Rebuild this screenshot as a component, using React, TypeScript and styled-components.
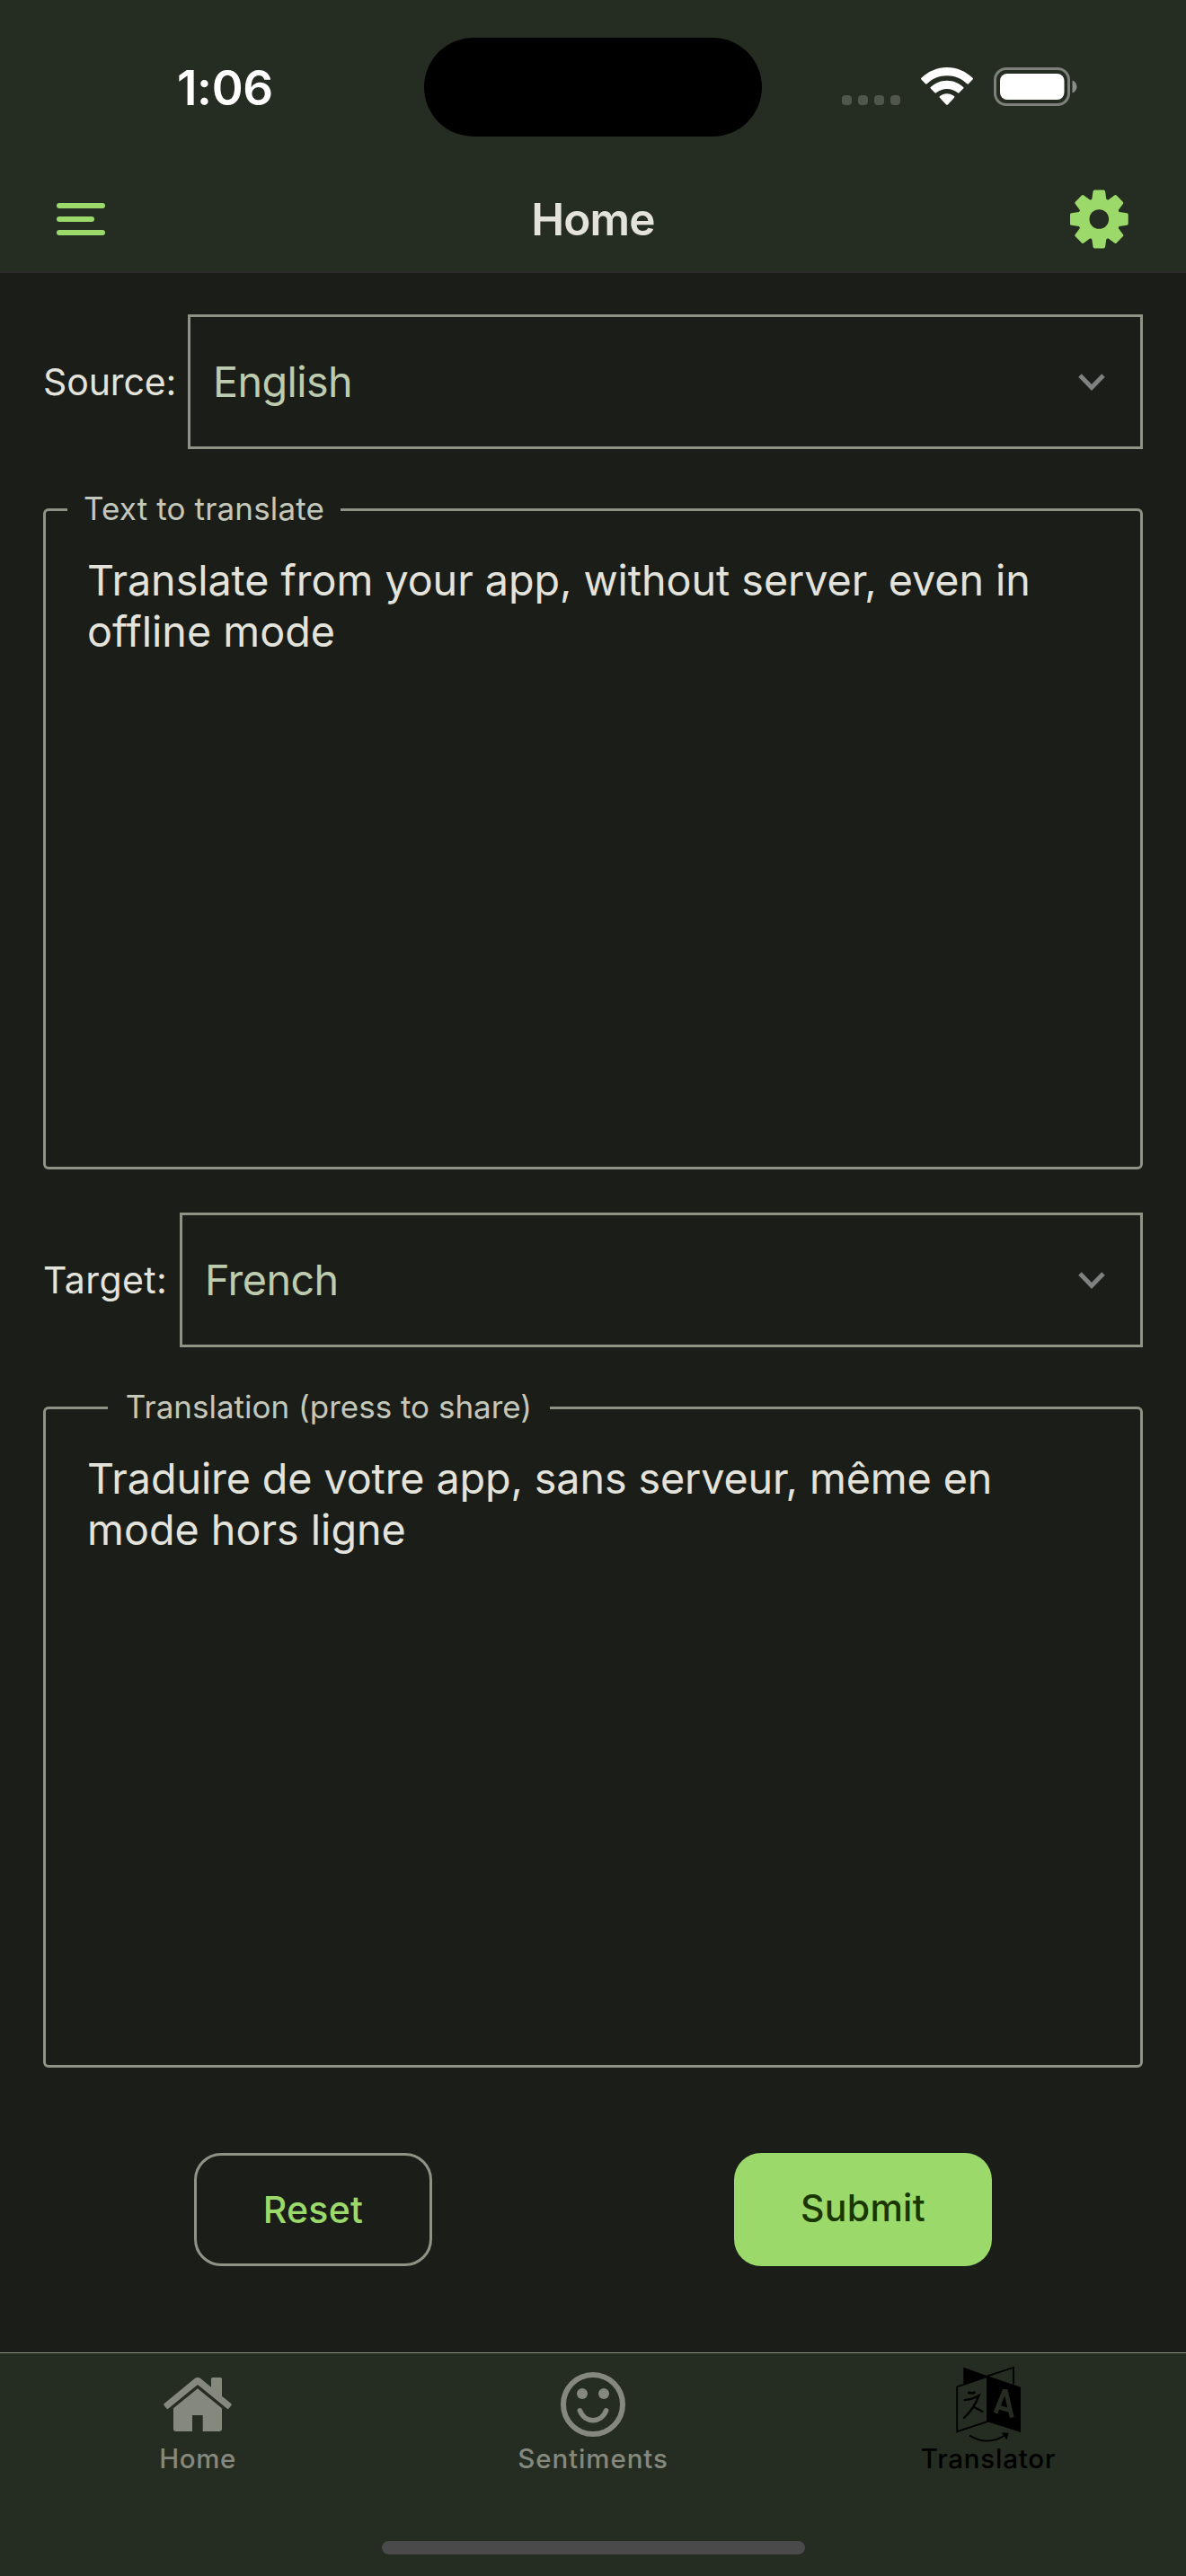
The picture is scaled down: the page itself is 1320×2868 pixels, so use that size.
import React from "react";
import styled, { createGlobalStyle } from "styled-components";

const c = {
  bar: "#252c21",
  page: "#1b1d18",
  primary: "#9cd96b",
  onPrimary: "#1b3700",
  outline: "#8f9285",
  text: "#e3e3dc",
  label: "#c4c8ba",
  select: "#bdcbaf",
  muted: "#85887d",
};

const Global = createGlobalStyle`
  html, body { margin: 0; background: ${c.page}; }
  * { box-sizing: border-box; }
  button { font: inherit; }
`;

const Screen = styled.div`
  width: 1320px;
  height: 2868px;
  display: flex;
  flex-direction: column;
  background: ${c.page};
  color: ${c.text};
  font-family: Inter, "Liberation Sans", sans-serif;
  overflow: hidden;
`;

const Header = styled.header`
  height: 304px;
  background: ${c.bar};
  border-bottom: 2px solid #2b2c29;
`;

const StatusBar = styled.div`
  height: 184px;
  display: grid;
  grid-template-columns: 472px 376px 472px;
`;

const Time = styled.div`
  padding: 66px 0 0 197px;
  font-size: 53px;
  line-height: 64px;
  font-weight: 600;
  letter-spacing: -0.3px;
  color: #fff;
`;

const Island = styled.div`
  margin-top: 42px;
  height: 110px;
  border-radius: 55px;
  background: #000;
`;

const StatusIcons = styled.div`
  padding: 74px 0 0 89px;
  display: flex;
  align-items: flex-start;
`;

const Signal = styled.div`
  display: flex;
  gap: 7px;
  margin: 32px 22px 0 0;
`;

const Dot = styled.span`
  width: 11px;
  height: 11px;
  border-radius: 4px;
  background: #50554e;
`;

const WifiBox = styled.div`
  width: 81px;
  height: 44px;
`;

const AppBar = styled.div`
  height: 118px;
  padding: 2px 63px 0;
  display: grid;
  grid-template-columns: 66px 1fr 66px;
  align-items: center;
`;

const Title = styled.h1`
  margin: 0;
  text-align: center;
  font-size: 49.5px;
  line-height: 60px;
  font-weight: 600;
  letter-spacing: -0.8px;
`;

const MenuLines = styled.div`
  display: flex;
  flex-direction: column;
  gap: 9px;
`;

const MenuLine = styled.span<{ $width: number }>`
  width: ${(p) => p.$width}px;
  height: 6px;
  border-radius: 3px;
  background: ${c.primary};
`;

const Main = styled.main`
  flex: 1;
  padding: 46px 48px 0;
`;

const PickerRow = styled.div`
  display: flex;
  align-items: center;
  justify-content: space-between;
  height: 150px;
`;

const PickerLabel = styled.span<{ $spacing: number }>`
  font-size: 41px;
  line-height: 50px;
  letter-spacing: ${(p) => p.$spacing}px;
  white-space: nowrap;
`;

const Picker = styled.div<{ $width: number }>`
  width: ${(p) => p.$width}px;
  height: 150px;
  border: 3px solid ${c.outline};
  padding: 0 38px 0 25px;
  display: flex;
  align-items: center;
  justify-content: space-between;
`;

const PickerValue = styled.span`
  font-size: 46.7px;
  line-height: 56px;
  letter-spacing: -0.6px;
  color: ${c.select};
`;

const Field = styled.section<{ $last?: boolean }>`
  height: 736px;
  margin: 66px 0 ${(p) => (p.$last ? 95 : 48)}px;
  border: 3px solid ${c.outline};
  border-radius: 6px;
  position: relative;
`;

const FieldLabel = styled.span<{ $left: number; $width: number; $spacing: number }>`
  position: absolute;
  left: ${(p) => p.$left}px;
  width: ${(p) => p.$width}px;
  top: -25px;
  height: 44px;
  text-align: center;
  background: ${c.page};
  color: ${c.label};
  font-size: 35px;
  line-height: 44px;
  letter-spacing: ${(p) => p.$spacing}px;
  white-space: nowrap;
`;

const FieldBody = styled.div`
  padding: 49px 46px 0 46px;
`;

const Line = styled.p<{ $spacing?: number }>`
  margin: 0;
  font-size: 46.7px;
  line-height: 57px;
  letter-spacing: ${(p) => p.$spacing ?? 0}px;
  white-space: nowrap;
`;

const Actions = styled.div`
  display: flex;
  justify-content: space-between;
  padding: 0 168px;
`;

const ActionButton = styled.button<{ $filled?: boolean; $width: number }>`
  width: ${(p) => p.$width}px;
  height: 126px;
  padding: ${(p) => (p.$filled ? "0 0 5px" : "0")};
  border: ${(p) => (p.$filled ? "0" : `3px solid ${c.outline}`)};
  border-radius: 30px;
  background: ${(p) => (p.$filled ? c.primary : "transparent")};
  color: ${(p) => (p.$filled ? c.onPrimary : c.primary)};
  font-size: 41px;
  line-height: 50px;
  font-weight: 500;
  letter-spacing: 0.3px;
`;

const TabBar = styled.nav`
  height: 249px;
  border-top: 1px solid ${c.outline};
  background: ${c.bar};
  display: flex;
  flex-direction: column;
  align-items: center;
`;

const Tabs = styled.div`
  width: 100%;
  height: 209px;
  display: grid;
  grid-template-columns: repeat(3, 1fr);
`;

const Tab = styled.div<{ $active?: boolean }>`
  display: flex;
  flex-direction: column;
  align-items: center;
  color: ${(p) => (p.$active ? "#000" : c.muted)};
`;

const TabIcon = styled.div`
  height: 98px;
  padding-top: 15px;
  display: flex;
  align-items: center;
  justify-content: center;
`;

const TabLabel = styled.span<{ $spacing: number }>`
  font-size: 29.5px;
  line-height: 39px;
  font-weight: 500;
  letter-spacing: ${(p) => p.$spacing}px;
`;

const HomeIndicator = styled.div`
  width: 471px;
  height: 15px;
  border-radius: 8px;
  background: #4a4a4a;
`;

function Wifi() {
  return (
    <svg width="60" height="44" viewBox="0 0 60 44">
      <path fill="#fff" d="M30 1C41 1 51 5.500 58.600 12.800Q59.400 13.600 58.600 14.500L54 19.300Q53.200 20 52.300 19.200C46 13.500 38.500 10.300 30 10.300S14 13.500 7.700 19.200Q6.800 20 6 19.300L1.400 14.500Q.6 13.600 1.400 12.800C9 5.500 19 1 30 1Z" />
      <path fill="#fff" d="M30 15.800C37 15.800 43.300 18.600 48.200 23Q49 23.800 48.200 24.600L43.600 29.300Q42.800 30 41.900 29.300C38.600 26.600 34.600 25 30 25S21.400 26.600 18.100 29.300Q17.200 30 16.400 29.300L11.800 24.600Q11 23.800 11.800 23C16.700 18.600 23 15.800 30 15.800Z" />
      <path fill="#fff" d="M30 30.300C33 30.300 35.800 31.400 38 33.100Q38.900 33.900 38.100 34.700L30.900 42.400Q30 43.300 29.100 42.400L21.900 34.700Q21.100 33.900 22 33.100C24.200 31.400 27 30.300 30 30.300Z" />
    </svg>
  );
}

function Battery() {
  return (
    <svg width="96" height="46" viewBox="0 0 96 46">
      <rect x="2.500" y="2.500" width="82" height="40" rx="12.500" fill="none" stroke="#7d807b" strokeWidth="3" />
      <rect x="8" y="8" width="71.500" height="29" rx="8" fill="#fff" />
      <path d="M88.500 15.500C91.500 16.500 93.500 19.200 93.500 22.500S91.500 28.500 88.500 29.500Z" fill="#8a8d88" />
    </svg>
  );
}

function Gear() {
  const teeth = [0, 45, 90, 135, 180, 225, 270, 315];
  return (
    <svg width="66" height="66" viewBox="-32.300 -33 66 66">
      <mask id="gearHole">
        <rect x="-33" y="-33" width="67" height="67" fill="#fff" />
        <circle r="10.800" fill="#000" />
      </mask>
      <g fill={c.primary} mask="url(#gearHole)">
        <circle r="23.500" />
        {teeth.map((a) => (
          <path key={a} transform={`rotate(${a})`} d="M-9 -20L-8 -22.500L-6.800 -30.800Q-6.500 -32.400 -5 -32.400H5Q6.500 -32.400 6.800 -30.800L8 -22.500L9 -20Z" />
        ))}
      </g>
    </svg>
  );
}

function Chevron() {
  return (
    <svg width="32" height="24" viewBox="0 0 32 24">
      <path d="M3 5L16 18.500L29 5" fill="none" stroke="#808080" strokeWidth="5" />
    </svg>
  );
}

function House() {
  return (
    <svg width="76" height="62" viewBox="0 0 76 62" fill="currentColor">
      <path d="M38 13.200L65 35.200V58Q65 61 62 61H43.700V43H32V61H14Q11 61 11 58V35.200Z" />
      <path d="M34.500 2.200Q38 -.4 41.500 2.200L53 11.700V2.700Q53 1 54.700 1H63.300Q65 1 65 2.700V21.700L75.200 30Q76.300 31 75.400 32L72.700 35.400Q71.700 36.500 70.500 35.500L38 8.900L5.500 35.500Q4.300 36.500 3.300 35.400L.6 32Q-.3 31 .8 30Z" />
    </svg>
  );
}

function Smile() {
  return (
    <svg width="74" height="74" viewBox="13 10 74 74" fill="none" stroke="currentColor">
      <circle cx="50" cy="47" r="33" strokeWidth="6" />
      <g fill="currentColor" stroke="none">
        <circle cx="38" cy="35" r="6" />
        <circle cx="62" cy="35" r="6" />
      </g>
      <path d="M35.400 53.800C41 68.300 59 68.300 64.600 53.800" strokeWidth="5.600" strokeLinecap="round" />
    </svg>
  );
}

function TranslateIcon() {
  return (
    <svg width="76" height="86" viewBox="0 0 76 86">
      <path d="M10.300 1.700L37 11.300L10.300 20.500Z" />
      <path d="M37 11.300L66 2V20.500" fill="none" stroke="#000" strokeWidth="1.800" />
      <path d="M37 11.800L3.200 23.300V73.200L37 62Z" fill="none" stroke="#000" strokeWidth="1.800" />
      <path d="M36.500 11L74 23.700V74L36.500 62Z" />
      <path d="M46 52.500L55.500 28.500H57.500L64.300 57.500M49.500 46L61.500 49.500" fill="none" stroke={c.bar} strokeWidth="4.800" />
      <path d="M15.500 29.300Q19 31.500 23.500 29.300" fill="none" stroke="#000" strokeWidth="2.800" />
      <path d="M10.700 38.300Q20 37.500 27.500 33Q22 48 10.300 58.500M20.300 45L32.200 51.300" fill="none" stroke="#000" strokeWidth="2.200" />
      <path d="M17 77.500Q37 90 57 77" fill="none" stroke="#000" strokeWidth="1.900" />
      <path d="M52.800 74.300L60.500 75L58.500 82.500Z" />
    </svg>
  );
}

type LanguageRowProps = {
  label: string;
  value: string;
  width: number;
  labelSpacing: number;
};

const LanguageRow = ({ label, value, width, labelSpacing }: LanguageRowProps) => (
  <PickerRow>
    <PickerLabel $spacing={labelSpacing}>{label}</PickerLabel>
    <Picker $width={width}>
      <PickerValue>{value}</PickerValue>
      <Chevron />
    </Picker>
  </PickerRow>
);

export default function App() {
  return (
    <Screen>
      <Global />
      <Header>
        <StatusBar>
          <Time>1:06</Time>
          <Island />
          <StatusIcons>
            <Signal><Dot /><Dot /><Dot /><Dot /></Signal>
            <WifiBox><Wifi /></WifiBox>
            <Battery />
          </StatusIcons>
        </StatusBar>
        <AppBar>
          <MenuLines>
            <MenuLine $width={54} />
            <MenuLine $width={42} />
            <MenuLine $width={54} />
          </MenuLines>
          <Title>Home</Title>
          <Gear />
        </AppBar>
      </Header>
      <Main>
        <LanguageRow label="Source:" value="English" width={1063} labelSpacing={-0.1} />
        <Field>
          <FieldLabel $left={24} $width={304} $spacing={0.15}>Text to translate</FieldLabel>
          <FieldBody>
            <Line $spacing={-0.06}>Translate from your app, without server, even in</Line>
            <Line>offline mode</Line>
          </FieldBody>
        </Field>
        <LanguageRow label="Target:" value="French" width={1072} labelSpacing={0.4} />
        <Field $last>
          <FieldLabel $left={69} $width={492} $spacing={0}>Translation (press to share)</FieldLabel>
          <FieldBody>
            <Line $spacing={-0.12}>Traduire de votre app, sans serveur, même en</Line>
            <Line>mode hors ligne</Line>
          </FieldBody>
        </Field>
        <Actions>
          <ActionButton $width={265}>Reset</ActionButton>
          <ActionButton $filled $width={287}>Submit</ActionButton>
        </Actions>
      </Main>
      <TabBar>
        <Tabs>
          <Tab>
            <TabIcon><House /></TabIcon>
            <TabLabel $spacing={0.6}>Home</TabLabel>
          </Tab>
          <Tab>
            <TabIcon><Smile /></TabIcon>
            <TabLabel $spacing={0.9}>Sentiments</TabLabel>
          </Tab>
          <Tab $active>
            <TabIcon><TranslateIcon /></TabIcon>
            <TabLabel $spacing={0.8}>Translator</TabLabel>
          </Tab>
        </Tabs>
        <HomeIndicator />
      </TabBar>
    </Screen>
  );
}
